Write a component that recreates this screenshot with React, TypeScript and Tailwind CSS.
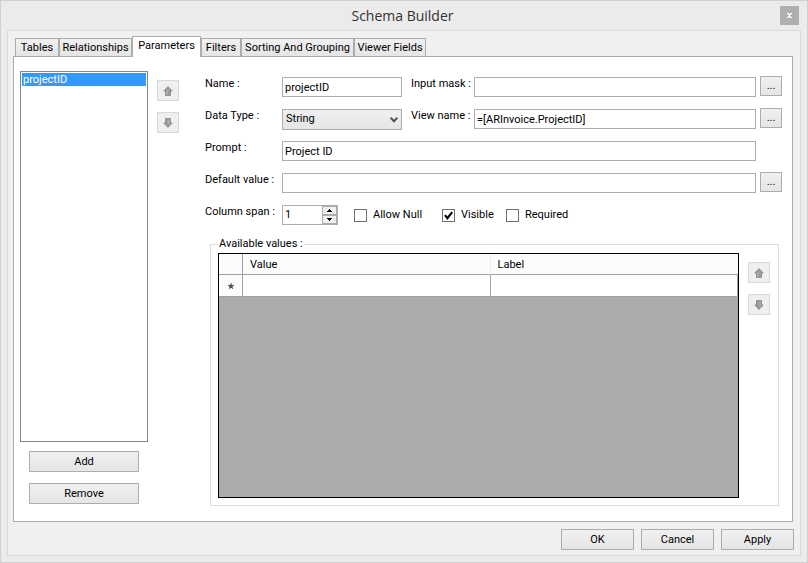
import React, { useState } from "react";
import clsx from "clsx";

const TABS = [
  { label: "Tables", width: "w-[44px]" },
  { label: "Relationships", width: "w-[73px]" },
  { label: "Parameters", width: "w-[69px]" },
  { label: "Filters", width: "w-[40px]" },
  { label: "Sorting And Grouping", width: "w-[113px]" },
  { label: "Viewer Fields", width: "w-[72px]" },
];

const FIELD =
  "h-[20px] min-w-0 border border-[#abadb3] bg-white px-0.5 outline-none focus:border-[#3399ff]";

export default function App() {
  const [tab, setTab] = useState("Parameters");

  return (
    <main className="flex min-h-screen flex-col border border-[#d0d0d0] bg-[#ebebeb] font-['Roboto','Liberation_Sans',sans-serif] text-[11px] leading-4 text-black">
      <header className="flex h-[29px] shrink-0 items-center pr-2">
        <h1 className="flex-1 pl-6 text-center font-['Open_Sans','Noto_Sans',sans-serif] text-[14px] text-[#333333]">
          Schema Builder
        </h1>
        <button
          aria-label="Close"
          className="flex h-[19px] w-[19px] items-center justify-center bg-[#afafaf]"
        >
          <svg width="5" height="5" viewBox="0 0 5 5" shapeRendering="crispEdges">
            <path
              d="M0 0h2v1h1V0h2v1H4v1H3v1h1v1h1v1H3V4H2v1H0V4h1V3h1V2H1V1H0z"
              fill="#fff"
            />
          </svg>
        </button>
      </header>

      <div className="mx-1.5 mb-1.5 flex flex-1 flex-col border border-[#dadada] bg-[#f0f0f0] pt-[5px] pb-[5px]">
        <div role="tablist" className="flex h-[20px] items-end pl-[7px]">
          {TABS.map((t) => (
            <button
              key={t.label}
              role="tab"
              aria-selected={tab === t.label}
              onClick={() => setTab(t.label)}
              className={clsx(
                "shrink-0 border border-b-0 border-[#acacac] text-center whitespace-nowrap",
                t.width,
                tab === t.label
                  ? "relative -mb-px h-[21px] bg-white pb-0.5"
                  : "h-[18px] bg-gradient-to-b from-[#f0f0f0] to-[#e5e5e5]",
              )}
            >
              {t.label}
            </button>
          ))}
        </div>

        <section className="mr-[7px] ml-[5px] flex flex-1 border border-[#acacac] bg-white pt-[14px] pr-[10px] pb-[15px] pl-1.5">
          <ParameterList />
          <div className="mt-[9px] ml-[9px]">
            <MoveButtons />
          </div>
          <ParameterForm />
        </section>

        <footer className="mt-[7px] flex justify-end gap-[7px] pr-1.5">
          <PushButton className="w-[73px]">OK</PushButton>
          <PushButton className="w-[73px]">Cancel</PushButton>
          <PushButton className="w-[73px]">Apply</PushButton>
        </footer>
      </div>
    </main>
  );
}

function ParameterList() {
  return (
    <div className="flex w-[128px] shrink-0 flex-col">
      <ul
        role="listbox"
        aria-label="Parameters"
        className="flex-1 border border-[#828790] bg-white p-px"
      >
        <li
          role="option"
          aria-selected="true"
          className="h-[13px] bg-[#3399ff] px-px leading-[14px] text-white"
        >
          projectID
        </li>
      </ul>
      <div className="flex flex-col gap-[11px] px-[9px] pt-[9px] pb-[2px]">
        <PushButton>Add</PushButton>
        <PushButton>Remove</PushButton>
      </div>
    </div>
  );
}

function ParameterForm() {
  return (
    <form
      onSubmit={(e) => e.preventDefault()}
      className="ml-[26px] flex min-w-0 flex-1 flex-col"
    >
      <div className="flex h-8 items-center">
        <Label htmlFor="name">Name :</Label>
        <input id="name" defaultValue="projectID" className={clsx(FIELD, "w-[120px]")} />
        <Label htmlFor="mask" short>
          Input mask :
        </Label>
        <input id="mask" className={clsx(FIELD, "flex-1")} />
        <BrowseButton label="Edit input mask" />
      </div>

      <div className="flex h-8 items-center">
        <Label htmlFor="type">Data Type :</Label>
        <div className="relative w-[120px]">
          <select
            id="type"
            className="block h-[21px] w-full appearance-none border border-[#acacac] bg-gradient-to-b from-[#f0f0f0] to-[#e5e5e5] px-[3px]"
          >
            <option>String</option>
            <option>Integer</option>
            <option>Date</option>
          </select>
          <svg
            className="pointer-events-none absolute top-2 right-1"
            width="8"
            height="6"
            viewBox="0 0 8 6"
          >
            <path d="M0.6 0.8 4 4.3 7.4 0.8" fill="none" stroke="#505050" strokeWidth="2" />
          </svg>
        </div>
        <Label htmlFor="view" short>
          View name :
        </Label>
        <input
          id="view"
          defaultValue="=[ARInvoice.ProjectID]"
          className={clsx(FIELD, "flex-1")}
        />
        <BrowseButton label="Select view" />
      </div>

      <div className="flex h-8 items-center pr-[26px]">
        <Label htmlFor="prompt">Prompt :</Label>
        <input id="prompt" defaultValue="Project ID" className={clsx(FIELD, "flex-1")} />
      </div>

      <div className="flex h-8 items-center">
        <Label htmlFor="default">Default value :</Label>
        <input id="default" className={clsx(FIELD, "flex-1")} />
        <BrowseButton label="Edit default value" />
      </div>

      <div className="flex h-8 items-center">
        <Label htmlFor="span">Column span :</Label>
        <ColumnSpan />
        <div className="flex pl-4">
          <CheckBox label="Allow Null" className="w-[88px]" />
          <CheckBox label="Visible" defaultChecked className="w-[64px]" />
          <CheckBox label="Required" />
        </div>
      </div>

      <AvailableValues />
    </form>
  );
}

function AvailableValues() {
  return (
    <fieldset className="mt-[5px] mr-[3px] ml-[5px] flex flex-1 border border-[#dcdcdc] pt-px pr-2 pb-[7px] pl-[7px]">
      <legend className="px-px">Available values :</legend>
      <div className="flex-1 border border-black bg-[#ababab]">
        <table className="w-full table-fixed border-separate border-spacing-0 bg-white text-left">
          <thead>
            <tr className="h-[21px] bg-[#fcfcfc]">
              <th className="w-[24px] border-r border-b border-[#a0a0a0]" />
              <th className="border-r border-b border-r-[#e3ecf7] border-b-[#a0a0a0] px-[7px] pt-0.5 font-normal">
                Value
              </th>
              <th className="border-b border-[#a0a0a0] px-[7px] pt-0.5 font-normal">
                Label
              </th>
            </tr>
          </thead>
          <tbody>
            <tr className="h-[22px]">
              <th className="border-r border-b border-[#a0a0a0] bg-[#fcfcfc]">
                <svg className="mx-auto" width="6" height="6" viewBox="0 0 6 6">
                  <circle cx="3" cy="3.2" r="1.7" fill="#505050" />
                  <path
                    d="M3 0.3v3M0.2 2.3l2.8 1M5.8 2.3l-2.8 1M1.2 5.7 3 3.2l1.8 2.5"
                    fill="none"
                    stroke="#505050"
                    strokeWidth="1.1"
                  />
                </svg>
              </th>
              <td className="border-r border-b border-[#a0a0a0]">
                <input aria-label="Value" className="block h-5 w-full px-1 outline-none" />
              </td>
              <td className="border-r border-b border-[#a0a0a0]">
                <input aria-label="Label" className="block h-5 w-full px-1 outline-none" />
              </td>
            </tr>
          </tbody>
        </table>
      </div>
      <div className="mt-[9px] ml-[9px]">
        <MoveButtons />
      </div>
    </fieldset>
  );
}

function Label({
  htmlFor,
  short,
  children,
}: {
  htmlFor: string;
  short?: boolean;
  children: React.ReactNode;
}) {
  return (
    <label
      htmlFor={htmlFor}
      className={clsx(
        "shrink-0 pb-1.5 whitespace-nowrap",
        short ? "w-[72px] pl-[9px]" : "w-[77px]",
      )}
    >
      {children}
    </label>
  );
}

function ColumnSpan() {
  const [span, setSpan] = useState(1);

  return (
    <div className="flex h-[20px] w-[56px] border border-[#abadb3] bg-white">
      <input
        id="span"
        value={span}
        onChange={(e) => setSpan(Number(e.target.value) || 1)}
        className="w-0 min-w-0 flex-1 px-0.5 outline-none"
      />
      <div className="flex w-[15px] flex-col">
        <button
          type="button"
          aria-label="Increase"
          onClick={() => setSpan((n) => n + 1)}
          className="flex flex-1 items-center justify-center border border-[#acacac] bg-[#f0f0f0]"
        >
          <svg width="5" height="3" viewBox="0 0 5 3" shapeRendering="crispEdges">
            <path d="M2 0h1v1h1v1h1v1H0V2h1V1h1z" />
          </svg>
        </button>
        <button
          type="button"
          aria-label="Decrease"
          onClick={() => setSpan((n) => Math.max(1, n - 1))}
          className="flex flex-1 items-center justify-center border border-[#acacac] bg-[#f0f0f0]"
        >
          <svg width="5" height="3" viewBox="0 0 5 3" shapeRendering="crispEdges">
            <path d="M0 0h5v1H4v1H3v1H2V2H1V1H0z" />
          </svg>
        </button>
      </div>
    </div>
  );
}

function CheckBox({
  label,
  defaultChecked,
  className,
}: {
  label: string;
  defaultChecked?: boolean;
  className?: string;
}) {
  return (
    <label className={clsx("relative flex items-center gap-1.5 whitespace-nowrap", className)}>
      <input
        type="checkbox"
        defaultChecked={defaultChecked}
        className="peer h-[13px] w-[13px] shrink-0 appearance-none border border-[#707070] bg-white"
      />
      <svg
        className="pointer-events-none invisible absolute left-0 peer-checked:visible"
        width="13"
        height="13"
        viewBox="0 0 13 13"
      >
        <path d="M3 6.2 5.4 9.2 10.2 3.2" fill="none" stroke="#000" strokeWidth="2.1" />
      </svg>
      {label}
    </label>
  );
}

function PushButton({
  className,
  children,
}: {
  className?: string;
  children: React.ReactNode;
}) {
  return (
    <button
      type="button"
      className={clsx(
        "h-[21px] border border-[#acacac] bg-gradient-to-b from-[#f0f0f0] to-[#e5e5e5] text-center hover:border-[#7eb4ea]",
        className,
      )}
    >
      {children}
    </button>
  );
}

function BrowseButton({ label }: { label: string }) {
  return (
    <button
      type="button"
      aria-label={label}
      className="mb-0.5 ml-1 h-[20px] w-[22px] shrink-0 border border-[#acacac] bg-gradient-to-b from-[#f0f0f0] to-[#e5e5e5]"
    >
      ...
    </button>
  );
}

function MoveButtons() {
  return (
    <div className="flex flex-col gap-[11px]">
      {["Move up", "Move down"].map((name, i) => (
        <button
          key={name}
          type="button"
          disabled
          aria-label={name}
          className="flex h-[21px] w-[22px] items-center justify-center border border-[#d9d9d9] bg-[#efefef]"
        >
          <svg
            className={i === 1 ? "rotate-180" : ""}
            width="10"
            height="10"
            viewBox="0 0 10 10"
          >
            <path
              d="M5 0.6 9.2 5H7.5v4.4h-5V5H0.8z"
              fill="#9c9c9c"
              stroke="#808080"
              strokeWidth="0.8"
            />
            <path d="M4 4.2v4.2" stroke="#bdbdbd" />
          </svg>
        </button>
      ))}
    </div>
  );
}
